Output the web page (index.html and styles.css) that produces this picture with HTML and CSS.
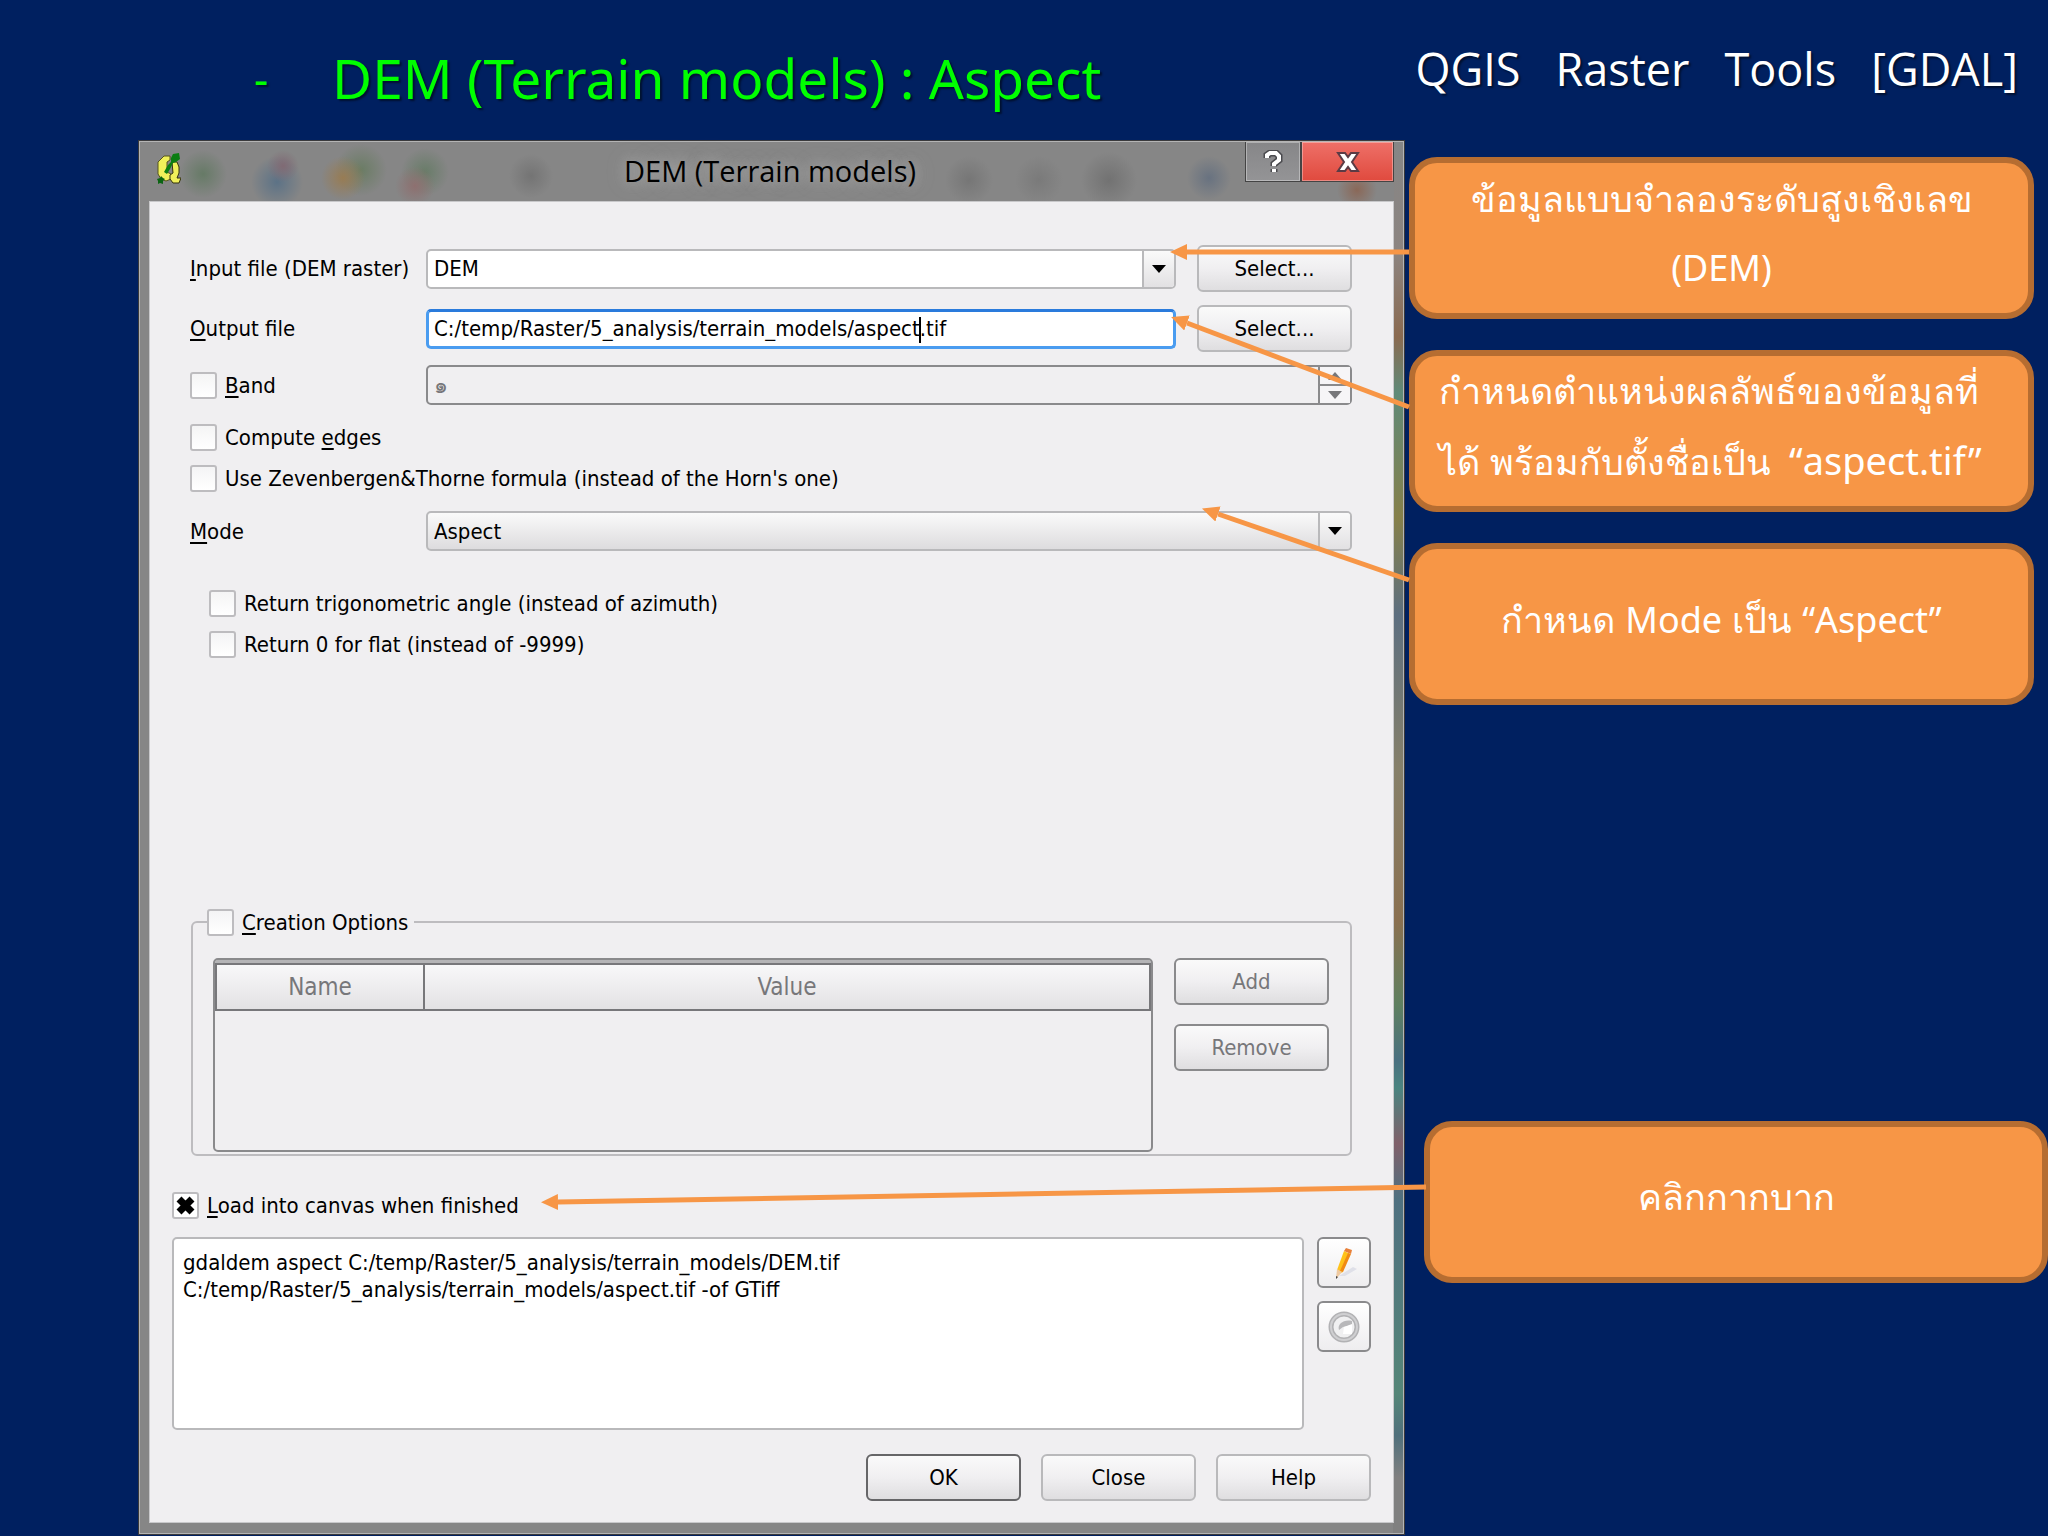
FILE: index.html
```html
<!DOCTYPE html>
<html lang="th">
<head>
    <meta charset="UTF-8">
    <title>QGIS Raster Tools [GDAL]</title>
    <link rel="stylesheet" href="styles.css">
</head>
<body>
    <div class="slide">
        <!-- Slide heading -->
        <header class="slide-head">
            <span class="dash">-</span>
            <h1>DEM (Terrain models) : Aspect</h1>
            <p class="topic">QGIS   Raster   Tools   [GDAL]</p>
        </header>

        <main class="content">
            <!-- Dialog window -->
            <section class="window">
                <div class="titlebar">
                    <svg class="app-icon" viewBox="0 0 24 32" width="24" height="32" aria-hidden="true">
                        <path d="M7 3h6v4l-3 2v10l4 2v5l-5 2-5-2-3-5V9z" fill="#f0f05a" stroke="#55551c"/>
                        <path d="M15 9h5l2 5v6l-2 5h4l-2 5h-6l-3-4v-4l3-2z" fill="#f0f05a" stroke="#33330c"/>
                        <path d="M16 1l6-1 1 6-4 3-3 1-3 6-3 5-3-2 4-7 3-3V5z" fill="#0b7d12"/>
                        <path d="M0 26l3-1 1-2 2 2 2 1-2 2v3l-3-1-2 1v-3z" fill="#0b6412"/>
                    </svg>
                    <h2>DEM (Terrain models)</h2>
                    <div class="window-buttons">
                        <button type="button" class="help-btn" aria-label="Help">
                            <svg viewBox="0 0 20 24" width="20" height="24">
                                <path d="M4 8V5l3-2h6l3 3v4l-5 4v2M11 19v3" fill="none" stroke="#4a4a4e" stroke-width="7"/>
                                <path d="M4 8V5l3-2h6l3 3v4l-5 4v2M11 19v3" fill="none" stroke="#fff" stroke-width="4"/>
                            </svg>
                        </button>
                        <button type="button" class="close-btn" aria-label="Close window">
                            <svg viewBox="0 0 24 22" width="24" height="22">
                                <path d="M2 2h7l3 4 3-4h7l-6 9 6 9h-7l-3-4-3 4H2l6-9z" fill="#fff" stroke="#5b3b45" stroke-width="2"/>
                            </svg>
                        </button>
                    </div>
                </div>

                <form class="client">
                    <div class="params">
                        <div class="row with-button">
                            <label for="inputFile"><u>I</u>nput file (DEM raster)</label>
                            <div class="field">
                                <select id="inputFile" class="box white"><option>DEM</option></select>
                                <span class="drop"><svg viewBox="0 0 14 8" width="14" height="8"><path d="M0 0h14L7 8z"/></svg></span>
                            </div>
                            <button type="button" class="btn">Select...</button>
                        </div>
                        <div class="row with-button">
                            <label for="outputFile"><u>O</u>utput file</label>
                            <div class="field">
                                <input type="text" id="outputFile" class="box white active" value="C:/temp/Raster/5_analysis/terrain_models/aspect.tif">
                                <span class="caret"></span>
                            </div>
                            <button type="button" class="btn">Select...</button>
                        </div>
                        <div class="row band">
                            <label class="check"><input type="checkbox"><span><u>B</u>and</span></label>
                            <div class="field">
                                <input type="text" class="box disabled" value="๑" aria-label="Band number" disabled>
                                <span class="spin">
                                    <button type="button" aria-label="Up" disabled><svg viewBox="0 0 14 8" width="14" height="8"><path d="M0 8h14L7 0z" fill="#77777a"/></svg></button>
                                    <button type="button" aria-label="Down" disabled><svg viewBox="0 0 14 8" width="14" height="8"><path d="M0 0h14L7 8z" fill="#77777a"/></svg></button>
                                </span>
                            </div>
                        </div>
                        <div class="checks">
                            <label class="check"><input type="checkbox"><span>Compute <u>e</u>dges</span></label>
                            <label class="check"><input type="checkbox"><span>Use Zevenbergen&amp;Thorne formula (instead of the Horn's one)</span></label>
                        </div>
                        <div class="row">
                            <label for="mode"><u>M</u>ode</label>
                            <div class="field">
                                <select id="mode" class="box raised"><option>Aspect</option></select>
                                <span class="drop"><svg viewBox="0 0 14 8" width="14" height="8"><path d="M0 0h14L7 8z"/></svg></span>
                            </div>
                        </div>
                        <div class="checks mode-options">
                            <label class="check"><input type="checkbox"><span>Return trigonometric angle (instead of azimuth)</span></label>
                            <label class="check"><input type="checkbox"><span>Return 0 for flat (instead of -9999)</span></label>
                        </div>
                    </div>

                    <fieldset class="creation">
                        <legend><label class="check"><input type="checkbox"><span><u>C</u>reation Options</span></label></legend>
                        <div class="creation-body">
                            <div class="table-frame">
                                <table>
                                    <thead>
                                        <tr><th class="name-col">Name</th><th>Value</th></tr>
                                    </thead>
                                </table>
                            </div>
                            <div class="creation-buttons">
                                <button type="button" class="btn" disabled>Add</button>
                                <button type="button" class="btn" disabled>Remove</button>
                            </div>
                        </div>
                    </fieldset>

                    <label class="check load"><input type="checkbox" checked><span><u>L</u>oad into canvas when finished</span></label>

                    <div class="command">
                        <textarea aria-label="Command">gdaldem aspect C:/temp/Raster/5_analysis/terrain_models/DEM.tif
C:/temp/Raster/5_analysis/terrain_models/aspect.tif -of GTiff</textarea>
                        <div class="command-buttons">
                            <button type="button" class="btn icon" aria-label="Edit">
                                <svg viewBox="0 0 32 36" width="32" height="36">
                                    <path d="M11 31l14-9 4 2-12 7z" fill="#dfe0e8"/>
                                    <path d="M16 6l6 3-8 19-5-3z" fill="#ffc21a"/>
                                    <path d="M20 8l3 1-8 18-3-1z" fill="#f08a14"/>
                                    <path d="M16 6l2-3 6 2-1 4z" fill="#e8803a"/>
                                    <path d="M9 24l5 3-6 7z" fill="#efc9a0"/>
                                    <path d="M8 34v-3l2 1z" fill="#444"/>
                                </svg>
                            </button>
                            <button type="button" class="btn icon" aria-label="Reset" disabled>
                                <svg viewBox="0 0 34 34" width="34" height="34">
                                    <circle cx="17" cy="17" r="13" fill="#f0f0f1" stroke="#b2b2b4" stroke-width="5"/>
                                    <circle cx="17" cy="17" r="13" fill="none" stroke="#cfcfd1" stroke-width="2"/>
                                    <path d="M25 11c-8-2-15 3-13 9l4-3 9-2z" fill="#b8b8ba"/>
                                    <path d="M17 17l8-3v10h-9z" fill="#fff"/>
                                </svg>
                            </button>
                        </div>
                    </div>

                    <div class="actions">
                        <button type="button" class="btn default">OK</button>
                        <button type="button" class="btn">Close</button>
                        <button type="button" class="btn">Help</button>
                    </div>
                </form>
            </section>

            <!-- Notes beside the dialog -->
            <aside class="notes">
                <p class="note">ข้อมูลแบบจำลองระดับสูงเชิงเลข<br><span>(DEM)</span></p>
                <p class="note left">กำหนดตำแหน่งผลลัพธ์ของข้อมูลที่<br>ได้ พร้อมกับตั้งชื่อเป็น <span>“aspect.tif”</span></p>
                <p class="note">กำหนด <span>Mode</span> เป็น <span>“Aspect”</span></p>
                <p class="note last">คลิกกากบาก</p>
            </aside>
        </main>

        <!-- Arrows from the notes to the controls -->
        <svg class="arrows" viewBox="0 0 2048 1536" aria-hidden="true">
            <defs>
                <marker id="head" markerUnits="userSpaceOnUse" markerWidth="17" markerHeight="16" refX="0" refY="8" orient="auto">
                    <path d="M0 0l17 8-17 8z" fill="#f79646"/>
                </marker>
            </defs>
            <path d="M1409 252H1187"/>
            <path d="M1409 407L1187 323"/>
            <path d="M1409 580L1218 514"/>
            <path d="M1426 1187L558 1202"/>
        </svg>
    </div>
</body>
</html>
```
FILE: styles.css
```css
* {
    margin: 0;
    padding: 0;
    box-sizing: border-box;
}

body {
    background: #002060;
    font-family: "DejaVu Sans Condensed", "DejaVu Sans", sans-serif;
    font-size: 22px;
    color: #000;
}

button, input, select, textarea {
    font: inherit;
    color: inherit;
}

.slide {
    position: relative;
    display: flex;
    flex-direction: column;
    min-height: 100vh;
    padding-bottom: 1px;
    overflow: hidden;
}

/* Slide heading */
.slide-head {
    display: flex;
    align-items: center;
    height: 140px;
    padding: 0 30px 0 254px;
    font-family: "Noto Sans", sans-serif;
    text-shadow: 2px 2px 2px rgba(0, 0, 0, 0.5);
}

.dash {
    width: 78px;
    padding-top: 16px;
    font-size: 44px;
    color: #0f0;
}

h1 {
    flex: 1;
    padding-top: 14px;
    font-size: 55px;
    font-weight: 400;
    color: #0f0;
}

.topic {
    padding-bottom: 4px;
    font-family: "Open Sans", sans-serif;
    font-size: 45px;
    font-weight: 400;
    color: #fff;
    white-space: pre;
}

.content {
    flex: 1;
    display: grid;
    grid-template-columns: 1267fr 625fr;
    gap: 4px;
    padding: 0 14px 0 138px;
}

/* Window frame */
.window {
    display: flex;
    flex-direction: column;
    padding: 0 9px 10px;
    border: 2px solid #b4b4b4;
    outline: 1px solid #3a3a3c;
    outline-offset: -1px;
    background:
        linear-gradient(#868686, #8c8480 8%, #8a6a50 14%, #5f8a78 18%, #86804a 27%, #5d6f80 34%, #86806a 45%, #8a7050 56%, #5f8060 62%, #4a7080 66%, #4a8480 68%, #80606a 72%, #4f7080 76%, #558678 90%, #50707c 93%, #808080 96%) right / 10px 100% no-repeat,
        #868686;
}

.titlebar {
    display: flex;
    align-items: flex-start;
    justify-content: space-between;
    height: 59px;
    padding-left: 8px;
    background:
        radial-gradient(circle at 54px 32px, #667a66, transparent 24px),
        radial-gradient(circle at 134px 24px, #806a74, transparent 16px),
        radial-gradient(circle at 128px 40px, #5c7286, transparent 26px),
        radial-gradient(circle at 194px 36px, #987c54, transparent 22px),
        radial-gradient(circle at 212px 28px, #6a7c64, transparent 26px),
        radial-gradient(circle at 266px 44px, #8e7070, transparent 20px),
        radial-gradient(circle at 276px 30px, #687c68, transparent 24px),
        radial-gradient(circle at 382px 34px, #747474, transparent 22px),
        radial-gradient(circle at 820px 38px, #767676, transparent 24px),
        radial-gradient(circle at 890px 38px, #7a7a7a, transparent 24px),
        radial-gradient(circle at 960px 38px, #727272, transparent 28px),
        radial-gradient(circle at 1060px 36px, #687280, transparent 22px),
        radial-gradient(circle at 1208px 48px, #8a6858, transparent 20px),
        #868686;
}

.app-icon {
    margin-top: 11px;
}

h2 {
    flex: 1;
    padding: 9px 0 0 114px;
    font-family: "Open Sans", sans-serif;
    font-size: 29px;
    font-weight: 400;
    line-height: 40px;
    text-align: center;
    text-shadow: 0 0 12px #aaa, 0 0 20px #aaa;
}

.window-buttons {
    display: flex;
}

.window-buttons button {
    display: grid;
    place-items: center;
    height: 40px;
    border: 1px solid #444;
    border-top: 0;
    box-shadow: inset 0 0 0 1px rgba(255, 255, 255, 0.35);
}

.help-btn {
    width: 56px;
    background: linear-gradient(#868688, #949496);
}

.close-btn {
    width: 93px;
    background: linear-gradient(#ee7068, #e04a3e);
}

.client {
    flex: 1;
    display: flex;
    flex-direction: column;
    padding: 43px 22px 21px;
    border: 1px solid #c8c8ca;
    background: #f0eff1;
}

/* Form rows */
.params {
    flex: 1;
    display: flex;
    flex-direction: column;
    gap: 13px;
    padding: 0 19px 0 18px;
}

.row {
    display: grid;
    grid-template-columns: 236px 1fr;
    align-items: center;
    min-height: 46px;
}

.row.with-button {
    grid-template-columns: 236px 1fr 155px;
}

.row.band {
    min-height: 40px;
}

.with-button .field {
    margin-right: 21px;
}

.field {
    position: relative;
}

.box {
    display: block;
    width: 100%;
    height: 40px;
    padding: 0 6px;
    border: 2px solid #b9b9bb;
    border-radius: 5px;
    appearance: none;
    outline: none;
}

.white {
    background: #fff;
}

.active {
    border: 3px solid #4a9cf0;
    border-top-color: #2a7bdc;
    padding: 0 5px;
}

.raised {
    background: linear-gradient(#fafafa, #dddcde);
}

.disabled {
    border-color: #8a8a8c;
    background: #f0eff1;
    color: #77777a;
}

.caret {
    position: absolute;
    top: 8px;
    left: 493px;
    width: 2px;
    height: 26px;
    background: #000;
}

.drop, .spin {
    position: absolute;
    top: 2px;
    right: 2px;
    bottom: 2px;
    width: 32px;
    border-left: 2px solid #b9b9bb;
    border-radius: 0 3px 3px 0;
    pointer-events: none;
}

.drop {
    display: grid;
    place-items: center;
    background: linear-gradient(#fafafa, #e2e1e3);
}

.spin {
    display: flex;
    flex-direction: column;
    border-color: #8a8a8c;
}

.spin button {
    flex: 1;
    display: grid;
    place-items: center;
    border: 0;
    background: #f6f5f7;
}

.spin button + button {
    border-top: 2px solid #8a8a8c;
}

.checks {
    display: flex;
    flex-direction: column;
    align-items: flex-start;
    gap: 11px;
}

.params .checks {
    padding: 4px 0 2px;
}

.params .mode-options {
    padding: 21px 0 0 19px;
}

.check {
    display: flex;
    align-items: center;
    gap: 8px;
    height: 30px;
}

.check input {
    width: 27px;
    height: 27px;
    border: 2px solid #bdbcbf;
    border-radius: 3px;
    background: linear-gradient(#f4f4f5, #fff);
    appearance: none;
}

.check input:checked {
    background: #fff url("data:image/svg+xml,%3Csvg xmlns='http://www.w3.org/2000/svg' viewBox='0 0 23 23'%3E%3Cpath d='M5 5l13 13M18 5L5 18' stroke='%23000' stroke-width='7'/%3E%3C/svg%3E") center no-repeat;
}

u {
    text-underline-offset: 3px;
    text-decoration-thickness: 2px;
}

.btn {
    height: 47px;
    width: 155px;
    border: 2px solid #b9b9bb;
    border-radius: 6px;
    background: linear-gradient(#fafafa, #f0eff1 50%, #dfdee0);
}

.btn:disabled {
    border-color: #8a8a8c;
    color: #77777a;
}

/* Creation options */
.creation {
    min-width: 0;
    margin: 0 19px 34px 19px;
    padding: 21px 21px 2px 20px;
    border: 2px solid #bdbcbf;
    border-radius: 6px;
}

.creation legend {
    margin-left: -6px;
    padding-right: 6px;
}

.creation-body {
    display: flex;
    gap: 21px;
}

.table-frame {
    flex: 1;
    height: 194px;
    padding-top: 3px;
    border: 2px solid #8a8a8c;
    border-radius: 5px;
    box-shadow: inset 0 3px #b4b4b6;
}

table {
    width: 100%;
    border-collapse: collapse;
}

th {
    height: 46px;
    border: 2px solid #77777a;
    background: linear-gradient(#f8f8f9, #e3e2e4);
    font-size: 24px;
    font-weight: 400;
    color: #77777a;
}

.name-col {
    width: 208px;
}

.creation-buttons {
    display: flex;
    flex-direction: column;
    gap: 19px;
}

/* Command preview */
.load {
    align-self: flex-start;
    margin-bottom: 17px;
}

.command {
    display: flex;
    gap: 13px;
}

textarea {
    flex: 1;
    height: 193px;
    padding: 10px 9px;
    border: 2px solid #b9b9bb;
    border-radius: 5px;
    background: #fff;
    line-height: 27px;
    outline: none;
    resize: none;
}

.command-buttons {
    display: flex;
    flex-direction: column;
    gap: 13px;
}

.icon {
    display: grid;
    place-items: center;
    width: 54px;
    height: 51px;
    border-color: #8a8a8c;
    background: linear-gradient(#fff, #eeedef);
}

.actions {
    display: flex;
    justify-content: flex-end;
    gap: 20px;
    margin-top: 24px;
}

.default {
    border-color: #666668;
}

/* Notes */
.notes {
    display: flex;
    flex-direction: column;
    gap: 31px;
    padding-top: 17px;
}

.note {
    align-content: center;
    height: 162px;
    padding: 0 24px 8px;
    border: 6px solid #b66d31;
    border-radius: 28px;
    background: #f79646;
    font-family: "Liberation Sans", sans-serif;
    font-size: 36px;
    line-height: 68px;
    color: #fff;
    text-align: center;
}

.note span {
    font-family: "Noto Sans", sans-serif;
}

.note.left {
    text-align: left;
}

.note.left span {
    padding-left: 8px;
    font-size: 38px;
}

.note.last {
    margin: auto -14px 252px 15px;
}

.arrows {
    position: absolute;
    top: 0;
    left: 0;
    width: 100%;
    pointer-events: none;
}

.arrows > path {
    fill: none;
    stroke: #f79646;
    stroke-width: 5;
    marker-end: url(#head);
}
```
